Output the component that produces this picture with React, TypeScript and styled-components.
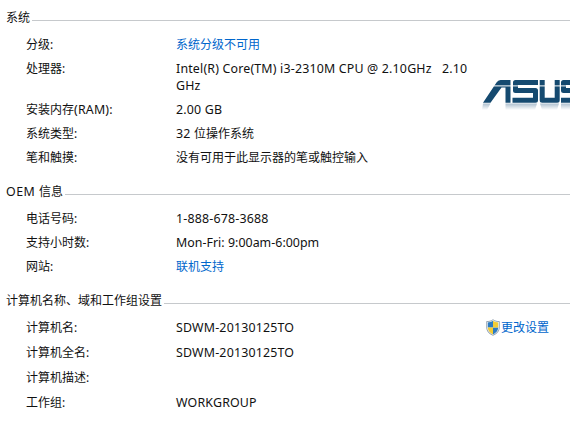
import * as React from 'react'
import styled, { createGlobalStyle } from 'styled-components'

const GlobalStyle = createGlobalStyle`
  body {
    margin: 0;
    background: #fff;
    overflow: hidden;
  }
`

const Page = styled.main`
  box-sizing: border-box;
  width: 570px;
  height: 422px;
  padding: 9px 0 0 6px;
  overflow: hidden;
  color: #111;
  font: 12px/17px 'Noto Sans', 'Noto Sans CJK SC', sans-serif;
`

const Section = styled.section<{ $height: number }>`
  height: ${props => props.$height}px;
`

const Heading = styled.h2`
  display: flex;
  align-items: center;
  gap: 2px;
  height: 17px;
  margin: 0;
  font-size: 12px;
  font-weight: 400;
  white-space: pre;

  &::after {
    content: '';
    flex: 1;
    height: 1px;
    margin-top: 5px;
    background: #c6c9cc;
  }
`

const Content = styled.div`
  display: flex;
  padding: 7px 0 0 20px;
`

const Rows = styled.dl<{ $gap: number }>`
  display: flex;
  flex-direction: column;
  gap: ${props => props.$gap}px;
  width: 456px;
  flex: none;
  margin: 0;
  padding-top: 3px;
`

const Row = styled.div`
  display: grid;
  grid-template-columns: 150px 1fr;
`

const Label = styled.dt`
  white-space: nowrap;
`

const Value = styled.dd`
  max-width: 300px;
  margin: 0;
`

const Latin = styled.span<{ $tracking?: number }>`
  font-size: 12.4px;
  line-height: 16px;
  letter-spacing: ${props => props.$tracking ?? 0.18}px;
`

const Link = styled.a`
  color: #0066cc;
  text-decoration: none;
  white-space: nowrap;
`

const Logo = styled.svg`
  flex: none;
  margin-top: 46px;
`

const Action = styled.div`
  display: flex;
  height: 17px;
  margin: 3px 0 0 3px;
`

const AsusLogo = () => (
  <Logo width="88" height="34" viewBox="0 0 88 34">
    <defs>
      <linearGradient id="fade" x1="0" y1="0" x2="0" y2="1">
        <stop offset="0" stopColor="#164a75" stopOpacity="0.35" />
        <stop offset="1" stopColor="#164a75" stopOpacity="0" />
      </linearGradient>
    </defs>
    <path d="M1 23.700 14.500 3.500Q16 1 18.500 1H28.500V23.700H23.500V8.500H19.500L8.500 23.700z" fill="#154a70" />
    <g fill="none" stroke="#154a70" strokeWidth="5" strokeLinejoin="round">
      <path d="M56 3.500H33.500V11.500H53.500V21.200H30.500" />
      <path d="M60.200 1v20.200H75.200V1" />
      <path d="M88 3.500H81.500v8h6.500M79 21.200h9" />
    </g>
    <path d="M12 6.900H88" stroke="#fff" strokeWidth="1" />
    <path d="M1 24.500H8.500L5 31H0zM23.500 24.500H55L53 31H23.500zM58 24.500H77L75 31H60zM79 24.500h9V31h-9z" fill="url(#fade)" />
  </Logo>
)

const Shield = () => (
  <svg width="16" height="17" viewBox="0 0 16 17">
    <defs>
      <clipPath id="shield">
        <path d="M8 1.800c1.600 1.100 3.300 1.600 5.200 1.600v5c0 3-2 5.200-5.200 7-3.200-1.800-5.200-4-5.200-7v-5C4.700 3.400 6.400 2.900 8 1.800z" />
      </clipPath>
    </defs>
    <path d="M8 .3c2 1.400 4 1.900 6.700 1.900v6.300c0 3.700-2.500 6.300-6.700 8.200-4.200-1.900-6.700-4.500-6.700-8.200V2.200C4 2.200 6 1.700 8 .3z" fill="#8b9bab" />
    <path d="M8 1.100c1.900 1.300 3.700 1.800 6 1.800v5.600c0 3.300-2.200 5.700-6 7.500-3.800-1.800-6-4.200-6-7.500V2.900c2.300 0 4.100-.5 6-1.800z" fill="#e4ebef" />
    <g clipPath="url(#shield)">
      <path d="M2 1h6v7.500H2zM8 8.500h6V17H8z" fill="#2d7bc2" />
      <path d="M8 1h6v7.500H8zM2 8.500h6V17H2z" fill="#f3cc35" />
    </g>
  </svg>
)

export default function App() {
  return (
    <Page>
      <GlobalStyle />
      <Section $height={174}>
        <Heading>系统</Heading>
        <Content>
          <Rows $gap={7}>
            <Row><Label>分级:</Label><Value><Link>系统分级不可用</Link></Value></Row>
            <Row><Label>处理器:</Label><Value><Latin>Intel(R) Core(TM) i3-2310M CPU @ 2.10GHz{'\u00a0\u00a0 '}2.10 GHz</Latin></Value></Row>
            <Row><Label>安装内存<Latin>(RAM):</Latin></Label><Value><Latin>2.00 GB</Latin></Value></Row>
            <Row><Label>系统类型:</Label><Value><Latin>32 </Latin>位操作系统</Value></Row>
            <Row><Label>笔和触摸:</Label><Value>没有可用于此显示器的笔或触控输入</Value></Row>
          </Rows>
          <AsusLogo />
        </Content>
      </Section>
      <Section $height={109}>
        <Heading><span><Latin $tracking={0.5}>OEM </Latin>信息</span></Heading>
        <Content>
          <Rows $gap={7}>
            <Row><Label>电话号码:</Label><Value><Latin>1-888-678-3688</Latin></Value></Row>
            <Row><Label>支持小时数:</Label><Value><Latin $tracking={0.03}>Mon-Fri: 9:00am-6:00pm</Latin></Value></Row>
            <Row><Label>网站:</Label><Value><Link>联机支持</Link></Value></Row>
          </Rows>
        </Content>
      </Section>
      <Section $height={125}>
        <Heading>计算机名称、域和工作组设置</Heading>
        <Content>
          <Rows $gap={8}>
            <Row><Label>计算机名:</Label><Value><Latin>SDWM-20130125TO</Latin></Value></Row>
            <Row><Label>计算机全名:</Label><Value><Latin>SDWM-20130125TO</Latin></Value></Row>
            <Row><Label>计算机描述:</Label><Value /></Row>
            <Row><Label>工作组:</Label><Value><Latin>WORKGROUP</Latin></Value></Row>
          </Rows>
          <Action><Shield /><Link>更改设置</Link></Action>
        </Content>
      </Section>
    </Page>
  )
}
